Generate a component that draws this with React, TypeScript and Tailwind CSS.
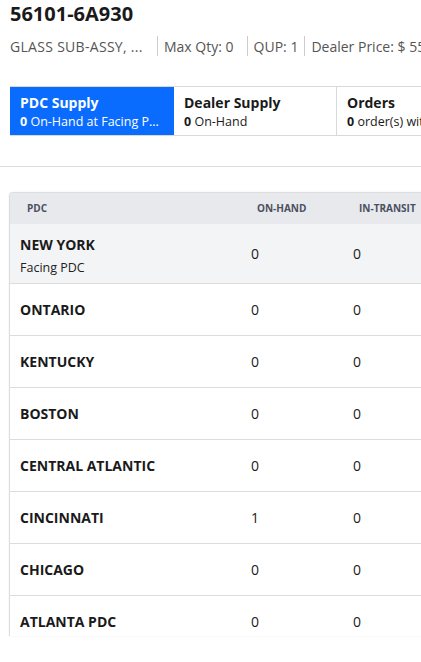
import React from "react";

const rows = [
  { name: "NEW YORK", sub: "Facing PDC", onHand: 0, inTransit: 0 },
  { name: "ONTARIO", onHand: 0, inTransit: 0 },
  { name: "KENTUCKY", onHand: 0, inTransit: 0 },
  { name: "BOSTON", onHand: 0, inTransit: 0 },
  { name: "CENTRAL ATLANTIC", onHand: 0, inTransit: 0 },
  { name: "CINCINNATI", onHand: 1, inTransit: 0 },
  { name: "CHICAGO", onHand: 0, inTransit: 0 },
  { name: "ATLANTA PDC", onHand: 0, inTransit: 0 },
];

export default function App() {
  return (
    <div className="w-[421px] h-[662px] overflow-hidden bg-white text-[#1a1a1a] font-['Open_Sans','Noto_Sans',sans-serif]">
      {/* Part header */}
      <div className="px-[10px] pt-[1px]">
        <h1 className="text-[20px] font-bold leading-[26px] whitespace-nowrap">56101-6A930</h1>
        <div className="mt-[8px] flex items-center h-[22px] text-[14px] text-[#555] whitespace-nowrap">
          <span className="shrink-0 w-[136px] tracking-[0.3px]">GLASS SUB-ASSY, ...</span>
          <span className="shrink-0 h-[20px] border-l border-[#ccc] ml-[11px] mr-[6px]" />
          <span className="shrink-0">Max Qty: 0</span>
          <span className="shrink-0 h-[20px] border-l border-[#ccc] ml-[13px] mr-[6px]" />
          <span className="shrink-0">QUP: 1</span>
          <span className="shrink-0 h-[20px] border-l border-[#ccc] ml-[6px] mr-[6px]" />
          <span className="shrink-0">Dealer Price: $ 55.20</span>
        </div>
      </div>

      {/* Tabs */}
      <div className="mt-[29px] ml-[10px] flex border-t border-b border-[#d9d9d9] h-[50px] w-[500px]">
        <div className="shrink-0 w-[164px] bg-[#0a6cff] text-white px-[10px] pt-[6px] whitespace-nowrap">
          <div className="text-[14px] font-bold leading-[20px]">PDC Supply</div>
          <div className="text-[12.5px] leading-[18px]">
            <b>0</b> On-Hand at Facing P...
          </div>
        </div>
        <div className="shrink-0 w-[163px] border-r border-[#d9d9d9] px-[10px] pt-[6px]">
          <div className="text-[14px] font-bold leading-[20px]">Dealer Supply</div>
          <div className="text-[12.5px] leading-[18px]">
            <b>0</b> On-Hand
          </div>
        </div>
        <div className="flex-1 px-[10px] pt-[6px] whitespace-nowrap">
          <div className="text-[14px] font-bold leading-[20px]">Orders</div>
          <div className="text-[12.5px] leading-[18px]">
            <b>0</b> order(s) with this part
          </div>
        </div>
      </div>

      <div className="mt-[30px] border-t border-[#ddd]" />

      {/* PDC table */}
      <div className="mt-[25px] ml-[9px] w-[520px] h-[444px] overflow-hidden rounded-tl-[4px] border-l border-t border-[#ddd] shadow-[0_0_2px_rgba(0,0,0,0.08)]">
        <div className="flex items-center h-[31px] bg-[#e8e9ec] text-[10px] font-bold text-[#4b5060]">
          <div className="w-[247px] pl-[17px]">PDC</div>
          <div className="w-[102px]">ON-HAND</div>
          <div className="flex-1">IN-TRANSIT</div>
        </div>
        {rows.map((r, i) => (
          <div
            key={r.name}
            className={
              i === 0
                ? "flex items-center h-[59px] bg-[#f3f4f6]"
                : "flex items-center h-[52px] border-t border-[#ddd]"
            }
          >
            <div className={r.sub ? "w-[241px] pl-[10px] pt-[6px]" : "w-[241px] pl-[10px]"}>
              <div className="text-[14px] font-bold leading-[20px] text-[#1a1a1a]">{r.name}</div>
              {r.sub && <div className="text-[12.5px] leading-[20px] text-[#222] mt-[3px]">{r.sub}</div>}
            </div>
            <div className="w-[102px] text-[14px]">{r.onHand}</div>
            <div className="flex-1 text-[14px]">{r.inTransit}</div>
          </div>
        ))}
      </div>
    </div>
  );
}
